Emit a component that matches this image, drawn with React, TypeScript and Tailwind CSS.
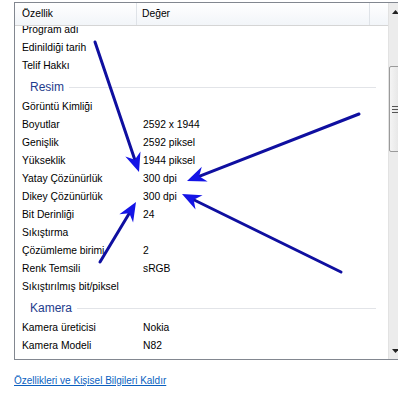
import React from 'react';

type Row = { label: string; value?: string } | { group: string };

const rows: Row[] = [
  { label: 'Edinildiği tarih' },
  { label: 'Telif Hakkı' },
  { group: 'Resim' },
  { label: 'Görüntü Kimliği' },
  { label: 'Boyutlar', value: '2592 x 1944' },
  { label: 'Genişlik', value: '2592 piksel' },
  { label: 'Yükseklik', value: '1944 piksel' },
  { label: 'Yatay Çözünürlük', value: '300 dpi' },
  { label: 'Dikey Çözünürlük', value: '300 dpi' },
  { label: 'Bit Derinliği', value: '24' },
  { label: 'Sıkıştırma' },
  { label: 'Çözümleme birimi', value: '2' },
  { label: 'Renk Temsili', value: 'sRGB' },
  { label: 'Sıkıştırılmış bit/piksel' },
  { group: 'Kamera' },
  { label: 'Kamera üreticisi', value: 'Nokia' },
  { label: 'Kamera Modeli', value: 'N82' },
];

const arrows = [
  { x1: 95, y1: 42, x2: 139, y2: 172 },
  { x1: 359, y1: 114, x2: 187, y2: 181 },
  { x1: 341, y1: 272, x2: 182, y2: 194 },
  { x1: 100, y1: 262, x2: 136, y2: 202 },
];

const Arrow: React.FC<{ x1: number; y1: number; x2: number; y2: number }> = ({ x1, y1, x2, y2 }) => {
  const a = Math.atan2(y2 - y1, x2 - x1);
  const len = 19;
  const w = 8;
  const bx = x2 - len * Math.cos(a);
  const by = y2 - len * Math.sin(a);
  const px = -Math.sin(a) * w;
  const py = Math.cos(a) * w;
  const nx = x2 - (len - 6) * Math.cos(a);
  const ny = y2 - (len - 6) * Math.sin(a);
  return (
    <g>
      <line x1={x1} y1={y1} x2={nx} y2={ny} stroke="#0f0fa0" strokeWidth={3} strokeLinecap="round" />
      <polygon
        points={`${x2},${y2} ${bx + px},${by + py} ${nx},${ny} ${bx - px},${by - py}`}
        fill="#1414e6"
      />
    </g>
  );
};

const App: React.FC = () => {
  return (
    <div
      className="relative w-[398px] h-[396px] overflow-hidden bg-white text-[10.3px] text-black"
      style={{ fontFamily: '"Liberation Sans", Arial, sans-serif' }}
    >
      <div className="pt-[2px] pl-[14px]">
        <div className="flex w-[392px] h-[358px] border border-[#828790] bg-white">
          <div className="flex-1 flex flex-col min-w-0">
            {/* header */}
            <div className="flex h-[23px] shrink-0 items-center border-b border-[#d5d5d5] bg-gradient-to-b from-white to-[#f2f5f9]">
              <div className="w-[122px] h-full flex items-center pl-[7px] border-r border-[#dfe3e8]">Özellik</div>
              <div className="w-[233px] h-full flex items-center pl-[5px] border-r border-[#dfe3e8]">Değer</div>
            </div>
            {/* rows */}
            <div className="flex-1 overflow-hidden">
              <div className="-mt-[5px]">
                <div className="h-[18px] flex items-center pl-[7px]">Program adı</div>
                {rows.map((r, i) =>
                  'group' in r ? (
                    <div key={i} className="h-[23px] flex items-center pl-[15px] pr-[12px] gap-[5px] pt-[1px]">
                      <span className="text-[12px] text-[#1e3c8c]">{r.group}</span>
                      <div className="flex-1 h-px bg-[#e2e4e8]" />
                    </div>
                  ) : (
                    <div key={i} className="h-[18px] flex items-center">
                      <div className="w-[128px] pl-[7px] whitespace-nowrap">{r.label}</div>
                      <div>{r.value}</div>
                    </div>
                  )
                )}
              </div>
            </div>
          </div>
          {/* scrollbar */}
          <div className="w-[17px] shrink-0 flex flex-col bg-[#ececec] border-l border-[#e2e2e2]">
            <div className="h-[17px] flex items-center pl-[3px]">
              <svg width="7" height="4" viewBox="0 0 7 4"><polygon points="3.5,0 7,4 0,4" fill="#222" /></svg>
            </div>
            <div className="h-[46px]" />
            <div className="h-[86px] border border-[#9a9a9a] rounded-[2px] bg-gradient-to-r from-[#f4f4f4] to-[#dedede] flex flex-col justify-center gap-[2px] pl-[2px]">
              <div className="w-[6px] h-px bg-[#555]" />
              <div className="w-[6px] h-px bg-[#555]" />
              <div className="w-[6px] h-px bg-[#555]" />
            </div>
            <div className="flex-1" />
            <div className="h-[17px] flex items-center pl-[3px]">
              <svg width="7" height="4" viewBox="0 0 7 4"><polygon points="0,0 7,0 3.5,4" fill="#222" /></svg>
            </div>
          </div>
        </div>
        <div className="mt-[13px]">
          <a href="#" className="text-[10px] text-[#0a5fbf] underline">
            Özellikleri ve Kişisel Bilgileri Kaldır
          </a>
        </div>
      </div>
      <svg className="absolute inset-0 pointer-events-none" width="398" height="396">
        {arrows.map((a, i) => (
          <Arrow key={i} {...a} />
        ))}
      </svg>
    </div>
  );
};

export default App;
